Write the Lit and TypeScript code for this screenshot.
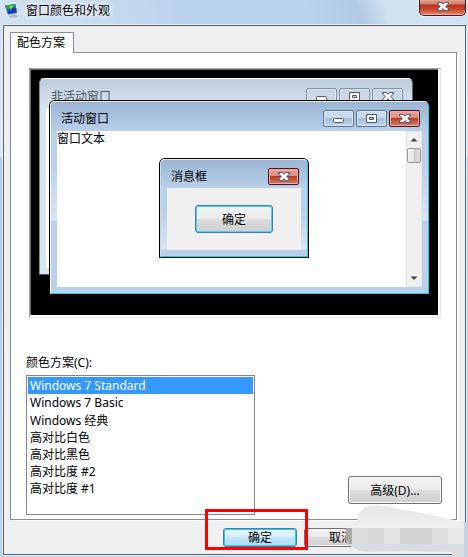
import { LitElement, html, css, svg, nothing } from "lit";
import { customElement, property, state } from "lit/decorators.js";
import { classMap } from "lit/directives/class-map.js";

const fontStack = css`"Noto Sans", "Noto Sans CJK SC", sans-serif`;

const glyphs = {
  min: svg`<rect x="10.5" y="8.5" width="10" height="4" rx="1" fill="#fff" stroke="#535666"/>`,
  max: svg`<path d="M10.500 4.500h10v8h-10z M13.500 7.500v2h4v-2z" fill="#fff" fill-rule="evenodd" stroke="#535666" stroke-linejoin="round"/>`,
  close: svg`<path d="M10.500 4.500h4l1.500 1.800 1.500-1.800h4v1.500L18.700 8.500l2.800 2.500v1.500h-4L16 10.700 14.500 12.500h-4V11l2.800-2.500L10.500 6z" fill="#f6f6f8" stroke="#535666" stroke-linejoin="round"/>`,
};

@customElement("caption-button")
class CaptionButton extends LitElement {
  @property() kind: "min" | "max" | "close" = "min";
  @property() tone = "blue";

  static styles = css`
    :host { display: block; }
    .btn {
      display: block;
      box-sizing: border-box;
      width: 31px;
      height: 17px;
      padding: 0;
      border: 1px solid #5c7090;
      border-radius: 2px;
      background: linear-gradient(#c8daec 0 45%, #a3bfda 50%, #bcd6f0);
      box-shadow: inset 0 0 0 1px #dce9f5;
    }
    .glyph { display: block; margin: -1px; width: 31px; height: 17px; }
    .faded {
      border-color: #8292ab;
      background: linear-gradient(#cad6e2, #d0dce8);
      box-shadow: inset 0 0 0 1px #d8e2ec;
    }
    .red {
      border-color: #520e18;
      background: linear-gradient(#eaa79c 0, #dc8c80 45%, #b93c22 50%, #d47c68);
      box-shadow: inset 0 0 0 1px #e9b0a6;
    }
    .main {
      width: 47px;
      height: 16px;
      border-top: 0;
      border-color: #481418;
      border-radius: 0 0 5px 5px;
      background: linear-gradient(#e0a294 0, #d0806e 25%, #b9321a 35%, #cc4a30 65%, #e08a70);
      box-shadow: inset 0 -1px 0 #f0b8a4, 0 0 0 1px #e4eef8;
    }
    .main .glyph { margin: -2px auto 0; }
  `;

  render() {
    const names = { min: "最小化", max: "最大化", close: "关闭" };
    return html`<button class=${classMap({ btn: true, [this.tone]: true })} aria-label=${names[this.kind]}>
      <svg class="glyph" viewBox="0 0 31 17">${glyphs[this.kind]}</svg>
    </button>`;
  }
}

@customElement("sample-window")
class SampleWindow extends LitElement {
  @property() caption = "";
  @property({ type: Boolean, reflect: true }) inactive = false;
  @property({ type: Boolean, reflect: true }) dialog = false;

  static styles = css`
    :host {
      box-sizing: border-box;
      display: flex;
      flex-direction: column;
      border: 1px solid #22d0e4;
      border-top-color: #e2edf8;
      border-left-color: #fff;
      border-radius: 5px 5px 0 0;
      background: linear-gradient(#9ab4d2, #b9d1ea 30px, #b9d1ea 60px, #d9e6f4 118px, #b9d1ea 119px);
      box-shadow: 0 0 0 1px #000;
    }
    :host([inactive]) {
      border-color: #fff #666 #555 #888;
      background: linear-gradient(#bfcddb, #d7e4f2 30px);
    }
    :host([dialog]) {
      border-left-color: #c8dcf0;
      background: linear-gradient(#9ab4d2, #b9d1ea 28px, #b9d1ea 50px, #d9e6f4 89px, #b9d1ea 90px);
    }
    .bar {
      display: flex;
      align-items: flex-start;
      gap: 2px;
      height: 29px;
      box-sizing: border-box;
      padding: 8px 8px 0 10px;
    }
    .name {
      flex: 1;
      padding-top: 1px;
      font: 12px/16px ${fontStack};
      color: #000;
    }
    :host([inactive]) .name { color: #4e5a66; }
    :host([inactive]) .bar { padding: 9px 9px 0 11px; }
    :host([dialog]) .bar { height: 28px; }
    .body {
      flex: 1;
      display: flex;
      min-height: 0;
      margin: 0 6px 6px;
      background: #fff;
    }
    :host([dialog]) .body {
      align-items: flex-start;
      justify-content: center;
      background: #f0f0f0;
    }
  `;

  render() {
    const tone = this.inactive ? "faded" : "blue";
    return html`
      <div class="bar">
        <span class="name">${this.caption}</span>
        ${this.dialog
          ? nothing
          : html`<caption-button kind="min" tone=${tone}></caption-button>
              <caption-button kind="max" tone=${tone}></caption-button>`}
        <caption-button kind="close" tone=${this.inactive ? "faded" : "red"}></caption-button>
      </div>
      <div class="body"><slot></slot></div>
    `;
  }
}

@customElement("app-root")
class AppRoot extends LitElement {
  @state() private scheme = "Windows 7 Standard";

  private schemes = [
    "Windows 7 Standard",
    "Windows 7 Basic",
    "Windows 经典",
    "高对比白色",
    "高对比黑色",
    "高对比度 #2",
    "高对比度 #1",
  ];

  static styles = css`
    :host {
      position: relative;
      display: flex;
      flex-direction: column;
      box-sizing: border-box;
      min-height: 100vh;
      padding: 0 2px 2px 3px;
      overflow: hidden;
      font: 12px/16px ${fontStack};
      color: #000;
      background:
        linear-gradient(70deg, #d4e2f0 0, #c6daee 25%, #b9d3ec 40%, #b9d3ec 66%, #b0cae4 76%, #cfe0f0 82%, #d2e2f2) 0 0 / 100% 25px no-repeat,
        linear-gradient(#d2e1f0, #dfeaf6 156px, #b2cee8 157px, #b9d3ec);
    }
    * { box-sizing: border-box; }
    .titlebar {
      display: flex;
      align-items: flex-start;
      height: 25px;
      padding-left: 1px;
    }
    .logo { width: 15px; height: 16px; margin-top: 3px; }
    .title {
      flex: 1;
      margin: 3px 0 0 7px;
      font: 12px/16px ${fontStack};
      text-shadow: 0 0 6px #fff, 0 0 6px #fff;
    }
    .client {
      flex: 1;
      display: flex;
      flex-direction: column;
      padding: 6px 8px 0 6px;
      border: 1px solid #56626e;
      background: #f0f0f0;
      box-shadow: 0 0 0 1px #e4eff9;
    }
    .tab {
      position: relative;
      align-self: flex-start;
      height: 21px;
      margin-bottom: -1px;
      padding: 0 8px 0 6px;
      border: 1px solid #898c95;
      border-bottom: 0;
      background: #fff;
      color: #000;
      font: 12px/18px ${fontStack};
    }
    .panel {
      padding: 15px 14px 4px 15px;
      border: 1px solid #898c95;
      background: #fff;
      box-shadow: 2px 1px 0 #fff;
    }
    .preview {
      margin: 0 1px 0 3px;
      padding: 0 2px 2px 0;
      border: 1px solid;
      border-color: #a0a0a0 #e8e8e8 #e8e8e8 #a0a0a0;
    }
    .desktop {
      position: relative;
      height: 246px;
      border: 1px solid #696969;
      border-width: 1px 0 0 1px;
      background: #000;
    }
    .back, .front, .message { position: absolute; }
    .back { inset: 8px 25px 40px 8px; }
    .front { inset: 31px 9px 21px 19px; }
    .message { top: 89px; left: 129px; width: 148px; height: 98px; }
    .text { flex: 1; }
    .scroll {
      display: flex;
      flex-direction: column;
      width: 16px;
      border: 1px solid #e6e6e6;
      background: #f0f0f0;
    }
    .arrow {
      height: 16px;
      padding: 0;
      border: 0;
      background: none;
    }
    .arrow svg { display: block; width: 14px; height: 16px; }
    .thumb {
      flex: none;
      height: 15px;
      border: 1px solid #979797;
      border-radius: 2px;
      background: linear-gradient(90deg, #f5f5f5, #e4e4e6 48%, #cfcfd2 52%, #dcdcde);
    }
    .rest { flex: 1; }
    .push {
      height: 28px;
      padding: 1px 0 0;
      border: 1px solid #707070;
      border-radius: 3px;
      background: linear-gradient(#f3f3f3, #ebebeb 49%, #dddddd 50%, #cfcfcf);
      box-shadow: inset 0 0 0 1px #fafafa;
      color: #000;
      font: 12px/16px ${fontStack};
    }
    .hot {
      width: 78px;
      margin-top: 17px;
      border-color: #3c7fb1;
      box-shadow: inset 0 0 0 1px #46d4f4;
    }
    .label { display: block; margin: 37px 0 4px; }
    .row {
      display: flex;
      justify-content: space-between;
      align-items: flex-end;
    }
    .list {
      width: 229px;
      height: 140px;
      padding: 1px;
      border: 1px solid #828790;
      border-radius: 0;
      outline: 0;
      background: #fff;
      color: #000;
      font: 12px/17px ${fontStack};
      overflow: hidden;
    }
    .item {
      height: 17px;
      min-height: 17px;
      padding: 0 2px;
      line-height: 17px;
    }
    .item:checked {
      background: #3399ff linear-gradient(#3399ff, #3399ff);
      color: #fff;
    }
    .more { width: 94px; margin-bottom: 11px; }
    .footer {
      display: flex;
      justify-content: flex-end;
      gap: 7px;
      padding: 8px 79px 7px 0;
    }
    .short { width: 74px; height: 19px; padding: 0; }
    .go {
      border-color: #3c7fb1;
      background: linear-gradient(#e8f5fc, #d8effb 49%, #bee6fd 50%, #b0def5);
      box-shadow: inset 0 0 0 1px #2cc8f8;
    }
    .okwrap { position: relative; display: flex; }
    .mark {
      position: absolute;
      inset: -19px -11px -3px -18px;
      border: 3px solid #f00;
      pointer-events: none;
      z-index: 1;
    }
    .smudge {
      position: absolute;
      right: 0;
      bottom: 0;
      width: 124px;
      height: 55px;
      pointer-events: none;
    }
  `;

  private pick(e: Event) {
    this.scheme = (e.target as HTMLSelectElement).value;
  }

  render() {
    return html`
      <header class="titlebar">
        <svg class="logo" viewBox="0 0 15 16">
          <path d="M5 11l6-1 1 2 2 1-3 2-6-1z" fill="#b4bac2" />
          <path d="M0 2l12-2 2.500 10.500-11 2z" fill="#e6ecf3" />
          <path d="M1 2.500l10.500-1.500L13 10 4 11.500z" fill="#2250d0" />
          <path d="M1 2.500l10.500-1.500.5 3-3 .5-2.500 3-1-2-3 1z" fill="#2ba83c" />
          <path d="M3.200 9l4-1.500 2-3 3.200 1v4L4 11z" fill="#2038b4" />
          <path d="M5 3.500l3-1 1 1.500-2.500 2z" fill="#6ae468" />
        </svg>
        <h1 class="title">窗口颜色和外观</h1>
        <caption-button kind="close" tone="main"></caption-button>
      </header>
      <main class="client">
        <button class="tab" role="tab" aria-selected="true">配色方案</button>
        <section class="panel">
          <div class="preview">
            <div class="desktop">
              <sample-window class="back" caption="非活动窗口" inactive></sample-window>
              <sample-window class="front" caption="活动窗口">
                <span class="text">窗口文本</span>
                <div class="scroll">
                  <button class="arrow" aria-label="向上">
                    <svg viewBox="0 0 14 16"><path d="M3.500 9.500L7 6l3.500 3.500z" fill="#404040" /></svg>
                  </button>
                  <div class="thumb"></div>
                  <div class="rest"></div>
                  <button class="arrow" aria-label="向下">
                    <svg viewBox="0 0 14 16"><path d="M3.500 6.500L7 10l3.500-3.500z" fill="#404040" /></svg>
                  </button>
                </div>
              </sample-window>
              <sample-window class="message" caption="消息框" dialog>
                <button class="push hot">确定</button>
              </sample-window>
            </div>
          </div>
          <label class="label" for="scheme">颜色方案(C):</label>
          <div class="row">
            <select class="list" id="scheme" size="8" @change=${this.pick}>
              ${this.schemes.map(
                (s) => html`<option class="item" value=${s} ?selected=${s === this.scheme}>${s}</option>`
              )}
            </select>
            <button class="push more">高级(D)...</button>
          </div>
        </section>
        <footer class="footer">
          <div class="okwrap">
            <button class="push short go">确定</button>
            <div class="mark"></div>
          </div>
          <button class="push short">取消</button>
        </footer>
      </main>
      <svg class="smudge" viewBox="344 502 124 55">
        <defs>
          <clipPath id="blot">
            <path d="M346 541v-13l5-3 6-4 2-8 6-6 6-1.500 14 .5 13 3 17 2.500 23 5 16 3.500 14 3v34h-16v-5l-50-1-30 1-12-1-8-4z" />
          </clipPath>
          <linearGradient id="haze" x1="0" y1="0" x2="0" y2="1">
            <stop offset="0" stop-color="#e3e4e5" />
            <stop offset=".4" stop-color="#eeefef" />
          </linearGradient>
        </defs>
        <g clip-path="url(#blot)">
          <rect x="344" y="502" width="124" height="55" fill="url(#haze)" />
          <rect x="344" y="528" width="8" height="16" fill="#a9a9a9" />
          <rect x="352" y="528" width="16" height="16" fill="#dcdcdd" />
          <rect x="368" y="528" width="16" height="16" fill="#d8d8d9" />
          <rect x="384" y="528" width="16" height="16" fill="#e4e4e5" />
          <rect x="400" y="528" width="32" height="16" fill="#d3d3d4" />
          <rect x="432" y="528" width="16" height="16" fill="#dfdfe0" />
          <rect x="448" y="528" width="16" height="16" fill="#e8e8e9" />
          <rect x="344" y="544" width="120" height="13" fill="#d9dde1" />
          <rect x="464" y="518" width="4" height="39" fill="#c8d2de" />
        </g>
      </svg>
    `;
  }
}
